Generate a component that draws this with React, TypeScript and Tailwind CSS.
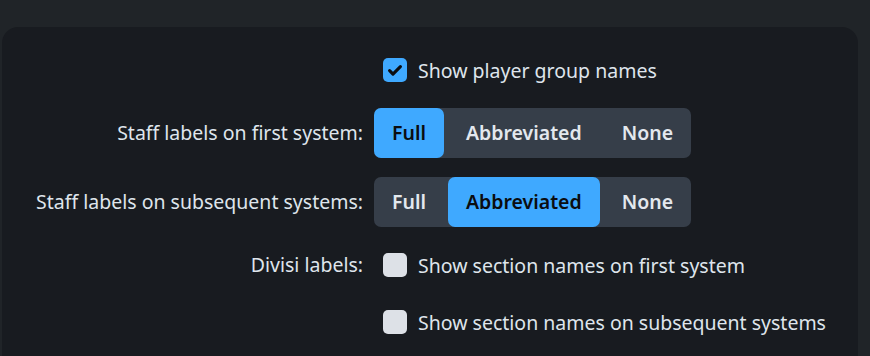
const labelCls = "text-right text-[19.5px] text-[#dfe5ec]"

function CheckRow({ checked, text }: { checked: boolean; text: string }) {
  return (
    <label className="flex h-[38px] items-center gap-[11px] pl-[9px] text-[19.5px] text-[#dfe5ec]">
      {checked ? (
        <span className="flex h-6 w-6 shrink-0 items-center justify-center rounded-[5px] bg-[#3fa9ff]">
          <svg width="18" height="18" viewBox="0 0 16 16" fill="none">
            <path d="M3.2 8.6l3 3L12.8 5" stroke="#0b0d10" strokeWidth="2.8" strokeLinecap="round" strokeLinejoin="round" />
          </svg>
        </span>
      ) : (
        <span className="h-6 w-6 shrink-0 rounded-[5px] bg-[#dde1e7]" />
      )}
      <span className="whitespace-nowrap pt-px">{text}</span>
    </label>
  )
}

function Segmented({ value }: { value: string }) {
  const options = ["Full", "Abbreviated", "None"]
  return (
    <div className="flex h-[50px] gap-1 rounded-[7px] bg-[#363e49]">
      {options.map((o) =>
        o === value ? (
          <button key={o} className="rounded-[7px] bg-[#3fa9ff] px-[18px] text-[19.5px] font-semibold text-[#0b0d10]">
            {o}
          </button>
        ) : (
          <button key={o} className="rounded-[7px] px-[18px] text-[19.5px] font-semibold text-[#e3e8ee]">
            {o}
          </button>
        )
      )}
    </div>
  )
}

export default function App() {
  return (
    <div className="h-[356px] w-[870px] overflow-hidden bg-[#202428] pt-[27px] pl-[2px] pr-[12px] font-['Noto_Sans',sans-serif]">
      <div className="h-[360px] rounded-t-[16px] bg-[#181b20] pt-[24px]">
        <div className="grid grid-cols-[361px_auto] items-center justify-start gap-x-[11px] gap-y-[19px]">
          <div />
          <CheckRow checked text="Show player group names" />

          <div className={labelCls}>Staff labels on first system:</div>
          <div className="flex">
            <Segmented value="Full" />
          </div>

          <div className={labelCls}>Staff labels on subsequent systems:</div>
          <div className="flex">
            <Segmented value="Abbreviated" />
          </div>

          <div className={labelCls}>Divisi labels:</div>
          <CheckRow checked={false} text="Show section names on first system" />

          <div />
          <CheckRow checked={false} text="Show section names on subsequent systems" />
        </div>
      </div>
    </div>
  )
}
